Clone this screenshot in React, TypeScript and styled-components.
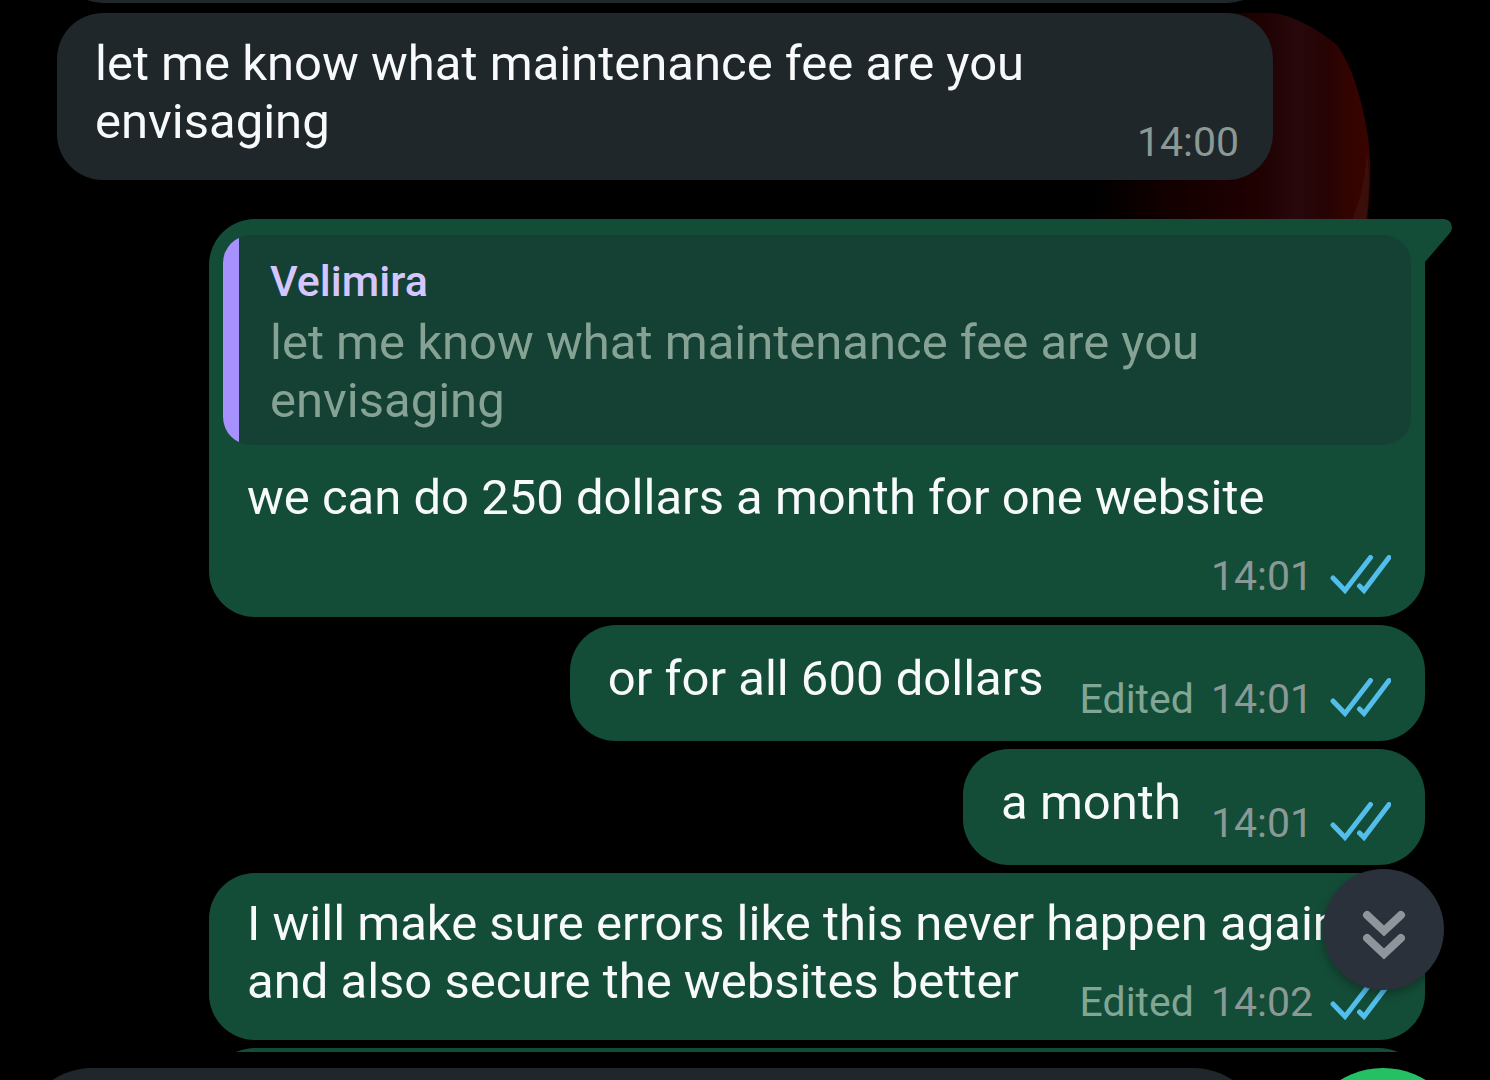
import React from "react";
import styled, { createGlobalStyle, css } from "styled-components";

const color = {
  incoming: "#1f272a",
  outgoing: "#144d37",
  quote: "#144133",
  accent: "#a791ff",
  read: "#53bdeb",
};

const GlobalStyle = createGlobalStyle`
  *, *::before, *::after { box-sizing: border-box; }
  body {
    margin: 0;
    background: #000;
    color: #f7f9fa;
    font-family: Roboto, "Liberation Sans", sans-serif;
    font-size: 49px;
    line-height: 58px;
  }
`;

const Screen = styled.div`
  position: relative;
  display: flex;
  flex-direction: column;
  height: 100vh;
  overflow: hidden;
`;

const Wallpaper = styled.svg`
  position: absolute;
  top: 0;
  right: 90px;
  width: 320px;
  height: 240px;
`;

const Conversation = styled.main`
  position: relative;
  flex: 1;
  min-height: 0;
  overflow: hidden;
`;

const Stream = styled.div`
  display: flex;
  flex-direction: column;
  gap: 8px;
  margin-top: -115px;
  padding: 0 65px 0 57px;
`;

type Kind = "single" | "multi" | "reply";

const bubblePadding = {
  single: "25px 34px 17px 38px",
  multi: "22px 34px 13px 38px",
  reply: "16px 14px 16px 14px",
};

const Bubble = styled.article<{ $out?: boolean; $kind: Kind; $newTurn?: boolean }>`
  position: relative;
  flex: none;
  max-width: 1216px;
  margin-top: ${(p) => (p.$out ? "0" : "2px")};
  padding: ${(p) => bubblePadding[p.$kind]};
  border-radius: 46px;
  align-self: ${(p) => (p.$out ? "flex-end" : "flex-start")};
  background: ${(p) => (p.$out ? color.outgoing : color.incoming)};
  ${(p) =>
    p.$newTurn &&
    css`
      margin-top: 31px;
      border-top-right-radius: 0;
    `}
`;

const FullBubble = styled(Bubble)`
  width: 100%;
  height: 116px;
`;

const Tail = styled.svg`
  position: absolute;
  top: 0;
  left: calc(100% - 1px);
  width: 28px;
  height: 44px;
`;

const Body = styled.div<{ $inset?: boolean }>`
  display: flow-root;
  padding: ${(p) => (p.$inset ? "0 20px 0 24px" : "0")};
`;

const Meta = styled.span<{ $wide?: boolean }>`
  float: right;
  display: flex;
  align-items: center;
  gap: 17px;
  margin: 24px 0 0 ${(p) => (p.$wide ? "36px" : "30px")};
  font-size: 41px;
  line-height: 50px;
  color: #8b9996;
`;

const Edited = styled.span`
  color: #82a695;
`;

const TickIcon = styled.svg`
  width: 61px;
  height: 42px;
  fill: none;
  stroke: ${color.read};
  stroke-width: 5;
  stroke-linecap: round;
`;

const QuoteCard = styled.blockquote`
  display: flex;
  margin: 0 0 24px;
  overflow: hidden;
  border-radius: 28px;
  background: ${color.quote};
  color: #85a294;

  &::before {
    content: "";
    flex: 0 0 16px;
    background: ${color.accent};
  }
`;

const QuoteText = styled.div`
  padding: 17px 24px 15px 31px;
`;

const QuoteName = styled.cite`
  display: block;
  margin-bottom: 4px;
  color: #d5c6ff;
  font-size: 43px;
  font-style: normal;
  font-weight: 500;
`;

const ScrollButton = styled.button`
  position: absolute;
  right: 46px;
  bottom: 90px;
  display: grid;
  place-items: center;
  width: 121px;
  height: 121px;
  padding: 0;
  border: 0;
  border-radius: 50%;
  background: #2a313b;
  box-shadow: 0 4px 10px rgba(0, 0, 0, 0.3);
`;

const ChevronIcon = styled.svg`
  width: 44px;
  height: 50px;
  margin-top: 10px;
  fill: none;
  stroke: #8e959b;
  stroke-width: 8;
  stroke-linecap: round;
`;

const Composer = styled.footer`
  position: relative;
  display: flex;
  align-items: flex-start;
  gap: 36px;
  flex: 0 0 28px;
  padding: 16px 25px 0 20px;
  overflow: hidden;
`;

const MessageInput = styled.input`
  flex: 1;
  min-width: 0;
  height: 144px;
  padding: 0 72px;
  border: 0;
  border-radius: 72px;
  background: ${color.incoming};
  color: inherit;
  font: inherit;
`;

const VoiceButton = styled.button`
  flex: none;
  width: 164px;
  height: 164px;
  border: 0;
  border-radius: 50%;
  background: #24c063;
`;

function Ticks() {
  return (
    <TickIcon viewBox="0 0 61 42" role="img" aria-label="Read">
      <path d="M3 23 L15 35.500 L40.500 2.500" />
      <path d="M29.500 31 L34 35.500 L59 2.500" />
    </TickIcon>
  );
}

function Stamp({ time, edited, sent }: { time: string; edited?: boolean; sent?: boolean }) {
  return (
    <Meta $wide={edited}>
      {edited && <Edited>Edited</Edited>}
      <time>{time}</time>
      {sent && <Ticks />}
    </Meta>
  );
}

export default function App() {
  return (
    <>
      <GlobalStyle />
      <Screen>
        <Wallpaper viewBox="0 0 320 240" aria-hidden="true">
          <defs>
            <linearGradient id="glow" x1="0" x2="1" y1="0" y2="0">
              <stop offset="0" stopColor="#000" />
              <stop offset="0.3" stopColor="#140000" />
              <stop offset="0.6" stopColor="#1f0102" />
              <stop offset="0.74" stopColor="#28080c" />
              <stop offset="0.84" stopColor="#260304" />
              <stop offset="0.93" stopColor="#340300" />
              <stop offset="1" stopColor="#380500" />
            </linearGradient>
          </defs>
          <path
            d="M10 240 V180 H150 V13 H190 C212 14 240 30 258 46 C273 70 280 95 285 120 C292 155 292 180 285 240 Z"
            fill="url(#glow)"
          />
          <path d="M287 150 Q285 190 272 220 H286 Q291 185 287 150 Z" fill="#3a0f0a" />
        </Wallpaper>

        <Conversation>
          <Stream>
            <FullBubble $kind="single" />
            <Bubble $kind="multi">
              <Body>
                let me know what maintenance fee are you envisaging
                <Stamp time="14:00" />
              </Body>
            </Bubble>

            <Bubble $out $kind="reply" $newTurn>
              <Tail viewBox="0 0 28 44" aria-hidden="true">
                <path d="M0 0 H20 Q28 1 28 9 Q28 12 25 15 L1 43 H0 Z" fill={color.outgoing} />
              </Tail>
              <QuoteCard>
                <QuoteText>
                  <QuoteName>Velimira</QuoteName>
                  let me know what maintenance fee are you envisaging
                </QuoteText>
              </QuoteCard>
              <Body $inset>
                we can do 250 dollars a month for one website
                <Stamp time="14:01" sent />
              </Body>
            </Bubble>

            <Bubble $out $kind="single">
              <Body>
                or for all 600 dollars
                <Stamp time="14:01" edited sent />
              </Body>
            </Bubble>

            <Bubble $out $kind="single">
              <Body>
                a month
                <Stamp time="14:01" sent />
              </Body>
            </Bubble>

            <Bubble $out $kind="multi">
              <Body>
                <span>I will make sure errors like this never happen again </span>
                <span>and also secure the websites better</span>
                <Stamp time="14:02" edited sent />
              </Body>
            </Bubble>

            <FullBubble $out $kind="single" />
          </Stream>
        </Conversation>

        <Composer>
          <MessageInput type="text" aria-label="Message" />
          <VoiceButton type="button" aria-label="Record voice message" />
        </Composer>

        <ScrollButton type="button" aria-label="Scroll to latest">
          <ChevronIcon viewBox="0 0 44 50" aria-hidden="true">
            <path d="M5 5 L22 21 L39 5" />
            <path d="M5 28 L22 44 L39 28" />
          </ChevronIcon>
        </ScrollButton>
      </Screen>
    </>
  );
}
